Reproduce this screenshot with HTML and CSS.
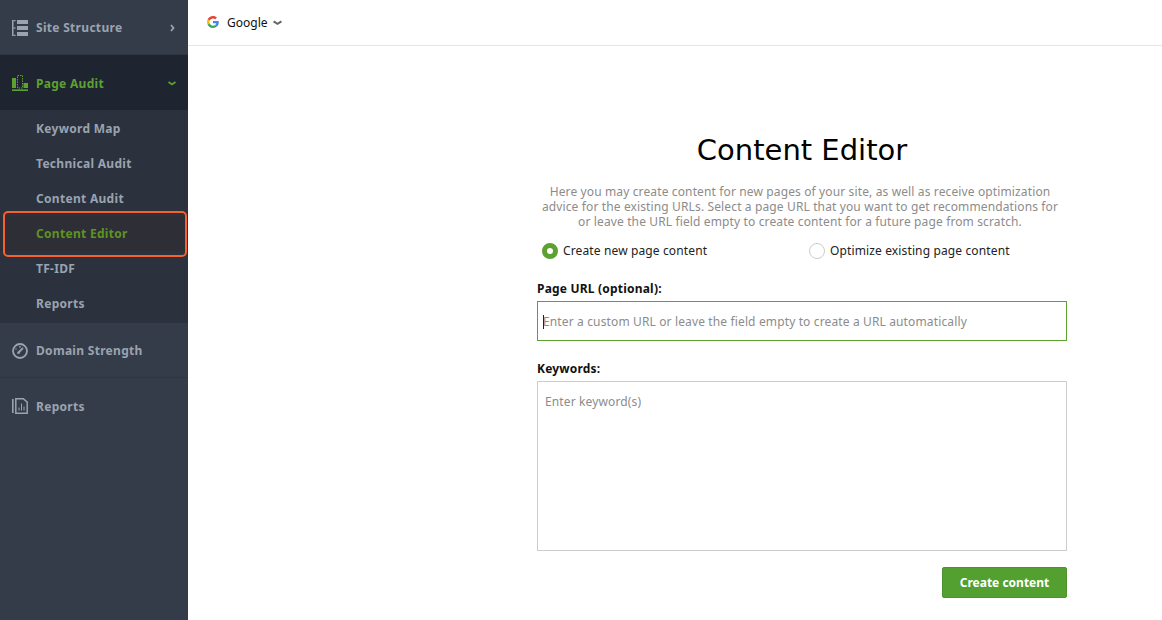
FILE: index.html
```html
<!DOCTYPE html>
<html lang="en">
<head>
<meta charset="utf-8">
<title>Content Editor</title>
<link rel="stylesheet" href="styles.css">
</head>
<body>
<div class="app">
  <nav class="sidebar">
    <div class="nav-row">
      <svg class="nav-icon" viewBox="0 0 16 16" fill="#9aa3b0"><rect x="0" y="0" width="1.5" height="16"/><rect x="1.5" y="0" width="2" height="1.3"/><rect x="1.5" y="7.3" width="2" height="1.3"/><rect x="1.5" y="14.7" width="2" height="1.3"/><rect x="5" y="0" width="11" height="4"/><rect x="5" y="6" width="11" height="4"/><rect x="5" y="12" width="11" height="4"/></svg>
      <span class="nav-label">Site Structure</span>
      <svg class="caret" viewBox="0 0 8 8"><path d="M3 1 L5.500 4 L3 7" fill="none" stroke="#9aa3b0" stroke-width="1.800"/></svg>
    </div>
    <div class="nav-row active">
      <svg class="nav-icon" viewBox="0 0 16 16" fill="#5da130"><rect x="0" y="3" width="4" height="10"/><rect x="5.500" y="0.500" width="5" height="12.500" fill="none" stroke="#5da130" stroke-width="1" stroke-dasharray="1.500 1"/><rect x="11.500" y="8" width="4.500" height="5"/><rect x="0" y="14.400" width="16" height="1.600"/></svg>
      <span class="nav-label">Page Audit</span>
      <svg class="caret" viewBox="0 0 8 8"><path d="M.5 3 L4 5.500 L7.500 3" fill="none" stroke="#5da130" stroke-width="1.800"/></svg>
    </div>
    <ul class="sub-list">
      <li class="sub-item">Keyword Map</li>
      <li class="sub-item">Technical Audit</li>
      <li class="sub-item">Content Audit</li>
      <li class="sub-item current">Content Editor<span class="highlight"></span></li>
      <li class="sub-item">TF-IDF</li>
      <li class="sub-item">Reports</li>
    </ul>
    <div class="nav-row bordered">
      <svg class="nav-icon" viewBox="0 0 16 16"><circle cx="8" cy="8" r="7" fill="none" stroke="#9aa3b0" stroke-width="1.800"/><path d="M6.500 9.500 L11 5" fill="none" stroke="#9aa3b0" stroke-width="1.800"/><circle cx="6.500" cy="9.800" r="1.300" fill="#9aa3b0"/><circle cx="8" cy="3.800" r=".9" fill="#9aa3b0"/><circle cx="4" cy="6" r=".7" fill="#9aa3b0"/></svg>
      <span class="nav-label">Domain Strength</span>
    </div>
    <div class="nav-row last">
      <svg class="nav-icon" viewBox="0 0 16 16"><path d="M.8 1v14" stroke="#9aa3b0" stroke-width="1.600"/><path d="M3.800 .8h7.500l3.900 3.400v11H3.800z" fill="none" stroke="#9aa3b0" stroke-width="1.500"/><path d="M7 12.500v-3M9.500 12.500v-7M12 12.500v-4" stroke="#9aa3b0" stroke-width="1"/></svg>
      <span class="nav-label">Reports</span>
    </div>
  </nav>
  <main class="main">
    <header class="topbar">
      <svg class="g-logo" viewBox="0 0 48 48"><path fill="#ea4335" d="M24 9.500c3.500 0 6.700 1.300 9.100 3.500l6.800-6.800C35.800 2.400 30.300 0 24 0 14.600 0 6.500 5.400 2.600 13.200l7.900 6.100C12.400 13.700 17.700 9.500 24 9.500z"/><path fill="#4285f4" d="M47 24.500c0-1.600-.2-3.100-.4-4.500H24v9h13c-.6 3-2.300 5.500-4.800 7.200l7.700 6C44.400 38 47 31.800 47 24.500z"/><path fill="#fbbc05" d="M10.500 28.700C10 27.200 9.700 25.600 9.700 24s.3-3.200.8-4.700l-7.900-6.100C.9 16.500 0 20.100 0 24s.9 7.500 2.600 10.800l7.900-6.100z"/><path fill="#34a853" d="M24 48c6.500 0 11.900-2.100 15.900-5.800l-7.700-6c-2.100 1.400-4.900 2.300-8.200 2.300-6.300 0-11.600-4.200-13.500-9.800l-7.900 6.100C6.500 42.600 14.600 48 24 48z"/></svg>
      <span class="engine">Google</span>
      <svg class="engine-caret" viewBox="0 0 8 8"><path d="M.5 3 L4 5.200 L7.500 3" fill="none" stroke="#666" stroke-width="1.800"/></svg>
    </header>
    <section class="content">
      <h1 class="title">Content Editor</h1>
      <p class="intro">Here you may create content for new pages of your site, as well as receive optimization advice for the existing URLs. Select a page URL that you want to get recommendations for or leave the URL field empty to create content for a future page from scratch.</p>
      <div class="radios">
        <div class="radio-item first"><span class="radio on"></span>Create new page content</div>
        <div class="radio-item"><span class="radio"></span>Optimize existing page content</div>
      </div>
      <label class="field-label url-label">Page URL (optional):</label>
      <div class="url-input"><span class="cursor"></span>Enter a custom URL or leave the field empty to create a URL automatically</div>
      <label class="field-label kw-label">Keywords:</label>
      <div class="kw-input">Enter keyword(s)</div>
      <div class="actions"><button class="create">Create content</button></div>
    </section>
  </main>
</div>
</body>
</html>
```
FILE: styles.css
```css
* { box-sizing: border-box; }
html, body { margin: 0; padding: 0; height: 100%; overflow: hidden; }
body { font-family: "Noto Sans", "DejaVu Sans", sans-serif; background: #fff; color: #000; }
.app { display: flex; width: 1162px; height: 620px; }
.sidebar { width: 188px; flex: none; background: #353c49; }
.nav-row { height: 55px; display: flex; align-items: center; padding: 1px 12px 0 12px; border-bottom: 1px solid #2f3641; }
.nav-row.active { background: #1e2430; border-bottom: none; }
.nav-row.bordered { border-top: 1px solid #353c49; padding-top: 0; }
.nav-row.last { height: 56px; border-bottom: none; padding-top: 0; }
.nav-icon { width: 16px; height: 16px; flex: none; }
.nav-label { margin-left: 8px; flex: 1; font-size: 12px; font-weight: 700; color: #9aa3b0; letter-spacing: .3px; }
.active .nav-label { color: #5da130; }
.caret { width: 8px; height: 8px; flex: none; }
.sub-list { list-style: none; margin: 0; padding: 1px 0 1px; height: 213px; background: #2b313d; }
.sub-item { position: relative; height: 35px; display: flex; align-items: center; padding-left: 36px; font-size: 12px; font-weight: 700; letter-spacing: .3px; color: #9aa3b0; }
.sub-item.current { color: #5d9420; background: #2e2f36; }
.highlight { position: absolute; left: 3px; top: -5px; width: 184px; height: 46px; border: 2px solid #f9602c; border-radius: 5px; }
.main { flex: 1; min-width: 0; display: flex; flex-direction: column; }
.topbar { height: 46px; flex: none; display: flex; align-items: center; padding: 0 0 0 19px; border-bottom: 1px solid #e6e6e6; }
.g-logo { width: 12px; height: 12px; margin-bottom: 1px; }
.engine { margin-left: 8px; font-size: 12px; color: #111; }
.engine-caret { width: 9px; height: 9px; margin-left: 5px; }
.content { width: 530px; margin-left: 349px; }
.title { margin: 85px 0 0; height: 38px; font-family: "DejaVu Sans", sans-serif; font-size: 29px; line-height: 38px; font-weight: 400; text-align: center; color: #000; }
.intro { margin: 15px 4px 0 0; font-size: 12px; letter-spacing: .13px; line-height: 15px; text-align: center; color: #8c8c8c; }
.radios { display: flex; margin-top: 14px; padding-left: 5px; height: 16px; }
.radio-item { display: flex; align-items: flex-start; font-size: 12px; line-height: 15px; letter-spacing: .13px; color: #222; }
.radio-item.first { width: 267px; }
.radio { width: 16px; height: 16px; border-radius: 50%; border: 1px solid #ccc; margin-right: 5px; background: #fff; }
.radio.on { border: 5px solid #5da130; }
.field-label { display: block; font-size: 12px; font-weight: 700; line-height: 15px; color: #111; letter-spacing: .2px; }
.url-label { margin-top: 22px; }
.url-input { position: relative; margin-top: 5px; height: 40px; border: 1px solid #5da130; padding: 0 0 0 5px; display: flex; align-items: center; font-size: 12px; letter-spacing: .135px; color: #8c8c8c; }
.cursor { position: absolute; left: 5px; top: 13px; width: 1px; height: 14px; background: #222; }
.kw-label { margin-top: 20px; }
.kw-input { margin-top: 5px; height: 170px; border: 1px solid #ccc; padding: 12px 7px; font-size: 12px; letter-spacing: .135px; line-height: 15px; color: #8c8c8c; }
.actions { display: flex; justify-content: flex-end; margin-top: 16px; }
.create { width: 125px; height: 31px; background: #53a030; border: 1px solid #4c9230; border-radius: 2px; font-family: inherit; font-size: 12px; font-weight: 700; color: #fff; padding: 0; }
```
